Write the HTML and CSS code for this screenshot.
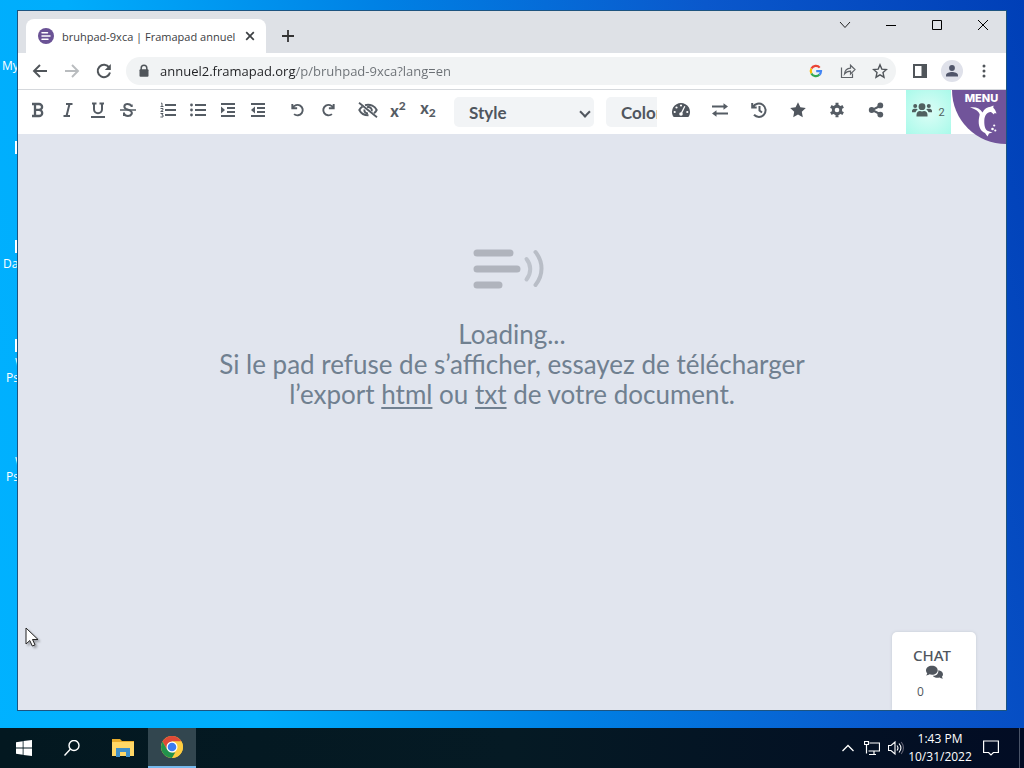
FILE: index.html
```html
<!DOCTYPE html>
<html lang="en">
<head>
<meta charset="utf-8">
<title>bruhpad-9xca | Framapad annuel</title>
<link rel="stylesheet" href="styles.css">
</head>
<body>
<div class="desktop">
  <div class="shortcuts" aria-hidden="true">
    <span class="shortcut s1">My</span>
    <i class="sheet p1"></i>
    <i class="sheet p2"></i>
    <span class="shortcut s2">Da</span>
    <i class="sheet p3"></i>
    <span class="shortcut s3"><span class="indent">W</span><br>Ps</span>
    <span class="shortcut s4"><span class="indent">W</span><br>Ps</span>
  </div>

  <div class="window">
    <header class="tabstrip">
      <div class="tab">
        <svg class="favicon" viewBox="0 0 16 16"><circle cx="8" cy="8" r="8" fill="#6a5295"/><path d="M4 4.7h5.500M4 8h8M4 11.300h6" stroke="#fff" stroke-width="1.500" stroke-linecap="round"/></svg>
        <span class="tab-title">bruhpad-9xca | Framapad annuel</span>
        <button class="tab-close" aria-label="Close tab"><svg viewBox="0 0 16 16"><path d="M4.200 4.200l7.600 7.600M11.800 4.200l-7.600 7.600" stroke="#3c4043" stroke-width="1.700"/></svg></button>
      </div>
      <button class="new-tab" aria-label="New tab"><svg viewBox="0 0 16 16"><path d="M8 2v12M2 8h12" stroke="#333" stroke-width="1.800"/></svg></button>
      <div class="caption">
        <button aria-label="Search tabs"><svg viewBox="0 0 16 16"><path d="M3 5l5 5.500L13 5" fill="none" stroke="#222"/></svg></button>
        <button aria-label="Minimize"><svg viewBox="0 0 16 16"><path d="M3 8.500h10" stroke="#000"/></svg></button>
        <button aria-label="Maximize"><svg viewBox="0 0 16 16"><path d="M3.500 3.500h9v9h-9z" fill="none" stroke="#000"/></svg></button>
        <button aria-label="Close"><svg viewBox="0 0 16 16"><path d="M3 3l10 10M13 3L3 13" stroke="#000"/></svg></button>
      </div>
    </header>

    <div class="navbar">
      <button class="nav" aria-label="Back"><svg viewBox="0 0 16 16"><path d="M15 8H2M8 2L2 8l6 6" fill="none" stroke="#50555a" stroke-width="1.900"/></svg></button>
      <button class="nav" aria-label="Forward"><svg viewBox="0 0 16 16"><path d="M1 8h13M8 2l6 6-6 6" fill="none" stroke="#b9bcbf" stroke-width="1.900"/></svg></button>
      <button class="nav" aria-label="Reload"><svg viewBox="0 0 16 16"><path d="M13.200 4.600A6.200 6.200 0 1 0 14 9.500" fill="none" stroke="#50555a" stroke-width="2"/><path d="M14.800 1v6H8.800z" fill="#50555a"/></svg></button>
      <div class="omnibox">
        <svg viewBox="0 0 16 16"><path d="M5.200 7V5a2.800 2.800 0 0 1 5.600 0v2" fill="none" stroke="#50555a" stroke-width="1.500"/><rect x="3.500" y="6.300" width="9" height="7.500" rx="1" fill="#50555a"/></svg>
        <input class="url" type="text" aria-label="Address" value="annuel2.framapad.org/p/bruhpad-9xca?lang=en">
        <button aria-label="Google"><svg viewBox="0 0 16 16" fill="none" stroke-width="2.200"><path d="M3.400 5.600A5 5 0 0 1 11.700 4.600" stroke="#ea4335"/><path d="M3.400 5.600a5 5 0 0 0 0 4.800" stroke="#fbbc05"/><path d="M3.400 10.400a5 5 0 0 0 8.100 1.200" stroke="#34a853"/><path d="M11.500 11.600A5 5 0 0 0 13 8.200H8.200" stroke="#4285f4"/></svg></button>
        <button aria-label="Share"><svg viewBox="0 0 16 16" fill="none" stroke="#5f6368" stroke-width="1.200"><path d="M1.500 4.500v10h11v-4"/><path d="M4.500 11c.4-4 2.600-5.800 6-5.900V2.200L15 6.600 10.500 11V8.200c-2.600 0-4.500.8-6 2.800z"/></svg></button>
        <button aria-label="Bookmark"><svg viewBox="0 0 16 16"><path d="M8 1.800l1.800 4.300 4.700.4-3.500 3.100 1 4.600L8 11.800l-4 2.400 1-4.600-3.500-3.100 4.700-.4z" fill="none" stroke="#50555a" stroke-width="1.400"/></svg></button>
      </div>
      <button class="ext" aria-label="Side panel"><svg viewBox="0 0 16 16"><path d="M1 1h14v14H1z" fill="#50555a"/><path d="M3 3h6.500v10H3z" fill="#fff"/></svg></button>
      <button class="ext avatar" aria-label="Profile"><svg viewBox="0 0 16 16" fill="#50556a"><circle cx="8" cy="5" r="2.900"/><path d="M2 13.500v-1.300C2 10 5.500 9 8 9s6 1 6 3.200v1.300z"/></svg></button>
      <button class="ext" aria-label="Browser menu"><svg viewBox="0 0 16 16" fill="#50555a"><circle cx="8" cy="3" r="1.500"/><circle cx="8" cy="8" r="1.500"/><circle cx="8" cy="13" r="1.500"/></svg></button>
    </div>

    <div class="padbar">
      <div class="edit-tools">
        <div class="group">
          <button aria-label="Bold"><svg viewBox="0 0 16 16" fill="none" stroke="#555c64" stroke-width="2.300"><path d="M2 2h7a3 2.800 0 0 1 0 5.800H5M9 7.800a3.200 3.100 0 0 1 0 6.200H2M5 2v12"/></svg></button>
          <button aria-label="Italic"><svg viewBox="0 0 16 16" fill="none" stroke="#555c64" stroke-width="2"><path d="M6 2h6.500M3.500 14H10M9.500 2l-3 12"/></svg></button>
          <button aria-label="Underline"><svg viewBox="0 0 16 16" fill="none" stroke="#555c64" stroke-width="2"><path d="M2 1.500h4.500M9.500 1.500H14M4 1.500v5.800a4 4 0 0 0 8 0V1.500M1 15h14"/></svg></button>
          <button aria-label="Strikethrough"><svg viewBox="0 0 16 16" fill="none" stroke="#555c64" stroke-width="2"><path d="M11.700 5V2.500M11.500 4C10.500 2.500 9 2 7.500 2 3.800 2 3.500 5.600 6 6.900l4 1.600c3.500 2 1.500 5.500-2 5.500-2 0-3.500-1-4-2.500M4 14v-3.500"/><path d="M0 8h16" stroke-width="1.500"/></svg></button>
        </div>
        <div class="group">
          <button aria-label="Ordered list"><svg viewBox="0 0 16 16" fill="none" stroke="#555c64" stroke-width="2"><path d="M5 3h11M5 8h11M5 13h11"/><path d="M1 1.200h1v3.300M.5 4.500h3M.5 6.500H3v1.300L.7 9.500h2.600M.5 11.500H3L1.800 13H3v2H.4" stroke-width="1"/></svg></button>
          <button aria-label="Unordered list"><svg viewBox="0 0 16 16" fill="none" stroke="#555c64" stroke-width="2"><path d="M5 3h11M5 8h11M5 13h11"/><path d="M1.500 3h.01M1.500 8h.01M1.500 13h.01" stroke-width="2.800" stroke-linecap="round"/></svg></button>
          <button aria-label="Indent"><svg viewBox="0 0 16 16"><path d="M1 2h14M7 6h8M7 10h8M1 14h14" stroke="#555c64" stroke-width="2"/><path d="M1 4.500L5 8l-4 3.500z" fill="#555c64"/></svg></button>
          <button aria-label="Outdent"><svg viewBox="0 0 16 16"><path d="M1 2h14M7 6h8M7 10h8M1 14h14" stroke="#555c64" stroke-width="2"/><path d="M5 4.500L1 8l4 3.500z" fill="#555c64"/></svg></button>
        </div>
        <div class="group">
          <button aria-label="Undo"><svg viewBox="0 0 16 16" fill="none" stroke="#555c64" stroke-width="2.200"><path d="M1.500 1v5h5.500M2 5.500a6 6 0 1 1 1.500 7.200"/></svg></button>
          <button aria-label="Redo"><svg viewBox="0 0 16 16" fill="none" stroke="#555c64" stroke-width="2.200"><path d="M14.500 1v5H9M14 5.500a6 6 0 1 0-1.500 7.200"/></svg></button>
        </div>
        <div class="group">
          <button aria-label="Clear authorship colors"><svg class="wide" viewBox="0 0 20 16" fill="none" stroke="#555c64"><path d="M4.500 4.500C2.800 5.700 1.700 7.200 1.300 8 3 11.500 6 13.300 10.500 13.300M7 3.200C12.500 1.700 17 4.500 18.700 8c-.5 1-1.400 2.200-2.700 3.200" stroke-width="1.900"/><path d="M6.300 7.500c0 2.200 1.500 3.800 3.700 3.900M9 5.200c3-.8 5.500 1.500 4.700 4" stroke-width="1.900"/><path d="M1 .8l18 14.400" stroke-width="1.800"/></svg></button>
          <button aria-label="Superscript" class="script">x<sup>2</sup></button>
          <button aria-label="Subscript" class="script lower">x<sub>2</sub></button>
        </div>
        <div class="selects">
          <select class="pick" aria-label="Style"><option>Style</option></select>
          <select class="pick" aria-label="Color"><option>Color</option></select>
        </div>
      </div>
      <div class="pad-tools">
        <button aria-label="Dashboard"><svg class="wide" viewBox="0 0 20 16"><path d="M10 1a9 9 0 0 0-8 13.200c.2.500.7.800 1.200.8h13.600c.5 0 1-.3 1.200-.8A9 9 0 0 0 10 1z" fill="#50565e"/><g fill="#fff"><circle cx="10" cy="3.500" r="1.100"/><circle cx="5.500" cy="5.500" r="1.100"/><circle cx="3.700" cy="10" r="1.100"/><circle cx="16.300" cy="10" r="1.100"/></g><path d="M13.800 4.300L10.500 11" stroke="#fff" stroke-width="1.300"/><circle cx="10" cy="12" r="1.800" fill="#fff"/></svg></button>
        <button aria-label="Import and export"><svg viewBox="0 0 16 16"><path d="M0 4.500h13M16 11.500H3" stroke="#555c64" stroke-width="1.800"/><path d="M11.500 1.200l4.500 3.300-4.500 3.300zM4.500 8.200L0 11.500l4.500 3.300z" fill="#555c64"/></svg></button>
        <button aria-label="Timeslider"><svg viewBox="0 0 16 16" fill="none" stroke="#555c64" stroke-width="2"><path d="M1.200 1v4.500h4.500M2 5a6.700 6.700 0 1 1 1 7.800M8.500 4v4.500l2.500 2"/></svg></button>
        <button aria-label="Saved revision"><svg viewBox="0 0 16 16"><path d="M8 .2l2.400 5 5.400.7-4 3.800 1 5.500L8 12.600l-4.800 2.600 1-5.500-4-3.800 5.400-.7z" fill="#50565e"/></svg></button>
        <button aria-label="Settings"><svg viewBox="0 0 16 16"><path d="M8 2.700l1.800.4 1.700 1 1.200 1.700.5 2.200-.5 2.200-1.200 1.700-1.700 1-1.800.4-1.800-.4-1.700-1-1.200-1.700L2.800 8l.5-2.200 1.200-1.700 1.700-1zM6.500.8h3v14.400h-3zM1.100 5.700l1.500-2.600 12.300 7.200-1.500 2.600zM13.400 3.100l1.500 2.600-12.300 7.200-1.500-2.600z" fill="#555c64"/><circle cx="8" cy="8" r="2.300" fill="#fff"/></svg></button>
        <button aria-label="Share pad"><svg viewBox="0 0 16 16" fill="#555c64"><path d="M13 3.500L4 8l9 4.500" fill="none" stroke="#555c64" stroke-width="2"/><circle cx="12.300" cy="3.400" r="2.900"/><circle cx="3.700" cy="8" r="2.900"/><circle cx="12.300" cy="12.600" r="2.900"/></svg></button>
      </div>
      <button class="users" aria-label="Users"><svg class="wide" viewBox="0 0 20 16" fill="#50605f"><circle cx="10" cy="4.700" r="3.400"/><circle cx="3.200" cy="4" r="2"/><circle cx="16.800" cy="4" r="2"/><path d="M4.500 14.500v-1.700c0-2.200 1.500-3.800 3.500-3.800 1.300.6 2.700.6 4 0 2 0 3.500 1.600 3.500 3.800v1.700zM0 10.300V9c0-1.200 1-2.200 2.200-2.200h2c.6 0 1.100.2 1.500.6A5 5 0 0 0 3.500 10.300zM20 10.300V9c0-1.200-1-2.200-2.200-2.200h-2c-.6 0-1.100.2-1.500.6a5 5 0 0 1 2.200 2.900z"/></svg><span>2</span></button>
      <button class="frama"><span>MENU</span><svg viewBox="0 0 30 32" fill="#fff"><path d="M1 2.500C6 1.500 11 3 13.500 7.500c1.800-3.700 5-5.500 8-5.700L24.500.5l-.2 2.300c1.700 1.800 2.700 3.500 3.200 5.700l-2-.5-.5 1.500-3-2.500c-4-.3-6.500 3.500-6.700 8.500-.2 5.500 1 9.500 3.700 10.500l4.500 1.500-3.500 1-1.500 3-2.500-3.500C12 26.500 9.500 22 9.700 16c.1-3 .8-5 1-6.500C10 6 6 4 1 2.500z"/><circle cx="25.200" cy="20.500" r="1.100"/><circle cx="23.500" cy="24" r="1.300"/><circle cx="26.300" cy="25.500" r="1.100"/></svg></button>
    </div>

    <main class="pad">
      <svg class="loader" viewBox="0 0 76 44" fill="none" stroke="#b0b4bd" stroke-linecap="round"><path d="M7 6h33M7 22h40M7 38h22" stroke-width="7"/><path d="M56.500 12c5 6 5 14 0 20.500" stroke-width="4" stroke="#bec3cc"/><path d="M65.500 5c8 10 8 23 0 33" stroke-width="4" stroke="#b8bdc6"/></svg>
      <p class="message">Loading...<br>Si le pad refuse de s’afficher, essayez de télécharger<br>l’export <a href="#html">html</a> ou <a href="#txt">txt</a> de votre document.</p>
    </main>
    <button class="chat"><span class="chat-title">CHAT</span><svg class="bubbles" viewBox="0 0 20 16" fill="#50565e"><path d="M14.500 5.800C17.500 6.200 20 8 20 10.500c0 1.200-.5 2.200-1.300 3 .3.800.8 1.400 1.300 2-1.500.2-2.900-.3-4-1-3 .9-6.500.2-8-2 4 .1 7-2.500 6.500-6.700z"/><path d="M7 .5c3.900 0 6.800 2.400 6.800 5.400s-2.900 5.300-6.800 5.300c-1 0-2-.2-2.900-.5-1 .8-2.400 1.300-4.100 1.300.7-.7 1.300-1.600 1.500-2.500C.6 8.500 0 7.300 0 5.900 0 2.900 3.100.5 7 .5z"/></svg><span class="chat-count">0</span></button>
  </div>

  <svg class="cursor" viewBox="0 0 14 21"><path d="M1 1v16l3.800-3.500 2.500 5.500 2.700-1.200-2.500-5.300H13z" fill="#fff" stroke="#222"/></svg>

  <footer class="taskbar">
    <button class="task" aria-label="Start"><svg viewBox="0 0 16 16" fill="#fff"><path d="M0 2.200l6.700-1v6.400H0zM7.500 1.100L16 0v7.600H7.500zM0 8.400h6.700v6.400L0 13.800zM7.500 8.400H16V16l-8.500-1.100z"/></svg></button>
    <button class="task" aria-label="Search"><svg viewBox="0 0 16 16" fill="none" stroke="#fff" stroke-width="1.400"><circle cx="10" cy="5.500" r="5"/><path d="M6.500 9L.5 15.500"/></svg></button>
    <button class="task gap" aria-label="File Explorer"><svg class="big" viewBox="0 0 22 22"><path d="M0 2h8l2 2h12v15H0z" fill="#e8ac2c"/><path d="M0 5h22v14H0z" fill="#ffd766"/><path d="M4 11h14v9h-4v-5H8v5H4z" fill="#3f8fc9"/></svg></button>
    <button class="task active" aria-label="Google Chrome"><svg class="big" viewBox="0 0 22 22"><circle cx="11" cy="11" r="11" fill="#ffcd40"/><path d="M1.500 5.500A11 11 0 0 1 20.500 5.500H11L6.200 13.700z" fill="#df4937"/><path d="M1.500 5.500l4.700 8.200L11 16.500h4.700L11 22A11 11 0 0 1 1.500 5.500z" fill="#22924c"/><path d="M15.800 13.700L11 22a11 11 0 0 0 9.500-16.500H11z" fill="#ffcd40"/><circle cx="11" cy="11" r="5.500" fill="#fff"/><circle cx="11" cy="11" r="4.300" fill="#3d7bf0"/></svg></button>
    <div class="tray">
      <button aria-label="Show hidden icons"><svg viewBox="0 0 16 16" fill="none" stroke="#fff" stroke-width="1.300"><path d="M2.500 11L8 5.500l5.500 5.500"/></svg></button>
      <button aria-label="Network"><svg viewBox="0 0 16 16" fill="none" stroke="#fff" stroke-width="1.200"><path d="M5.500 3h10v8h-11M10 11v3.500M5 14.500h7M.5 1.500h4v3h-4zM2.500 4.500v9"/></svg></button>
      <button aria-label="Volume"><svg viewBox="0 0 16 16" fill="none" stroke="#fff" stroke-width="1.100"><path d="M.5 5.500h2.500l4-3.500v12L3 10.500H.5zM9 5.500c1.200 1.500 1.200 3.500 0 5M11 3.500c2.300 2.700 2.300 6.300 0 9"/><path d="M13.200 2c3 3.500 3 8.500 0 12" stroke="#667"/></svg></button>
      <time class="clock">1:43 PM<br>10/31/2022</time>
      <button class="notes" aria-label="Notifications"><svg viewBox="0 0 16 16" fill="none" stroke="#fff" stroke-width="1.200"><path d="M.6 1h14.800v11.500h-5L8 15l-2.400-2.500h-5z"/></svg></button>
    </div>
  </footer>
</div>
</body>
</html>
```
FILE: styles.css
```css
* { box-sizing: border-box; }
body { margin: 0; font-family: "Open Sans", "Noto Sans", sans-serif; font-size: 12px; }
button, input, select { font: inherit; border: 0; background: none; padding: 0; margin: 0; }
button { display: flex; align-items: center; justify-content: center; }
svg { display: block; width: 16px; height: 16px; flex: none; }
svg.wide { width: 20px; }
svg.big { width: 22px; height: 22px; }

.desktop {
  position: relative;
  display: flex;
  flex-direction: column;
  justify-content: flex-end;
  min-height: 100vh;
  overflow: hidden;
  background: linear-gradient(75deg, #00b2ff 0%, #00adfc 22%, #0080e4 48%, #0a58cc 74%, #003fb7 100%);
}
.shortcut { position: absolute; color: #fff; line-height: 15px; }
.indent { padding-left: 9px; }
.s1 { left: 2px; top: 58px; }
.s2 { left: 3px; top: 256px; }
.s3 { left: 6px; top: 355px; }
.s4 { left: 6px; top: 454px; }
.sheet { position: absolute; left: 15px; width: 3px; height: 13px; background: #fff; }
.p1 { top: 141px; }
.p2 { top: 240px; }
.p3 { top: 339px; }

.window {
  position: absolute;
  inset: 10px 17px 57px 17px;
  display: flex;
  flex-direction: column;
  border: 1px solid #1d5480;
  background: #e1e5ee;
  overflow: hidden;
}
.tabstrip { display: flex; height: 42px; padding-left: 8px; background: #dee1e6; }
.tab {
  display: flex;
  align-items: center;
  width: 240px;
  margin-top: 8px;
  padding: 0 8px 0 12px;
  border-radius: 8px 8px 0 0;
  background: #fff;
  color: #3c4043;
  font-size: 11px;
}
.favicon { margin-right: 8px; }
.tab-title { flex: 1; white-space: nowrap; }
.new-tab { width: 28px; margin: 8px 0 0 8px; }
.caption { display: flex; align-items: flex-start; margin-left: auto; }
.caption button { width: 46px; height: 28px; }

.navbar {
  display: flex;
  align-items: center;
  height: 37px;
  padding: 0 6px;
  background: #fff;
  border-bottom: 1px solid #d5d8dc;
}
.nav { width: 32px; height: 28px; }
.omnibox {
  flex: 1;
  display: flex;
  align-items: center;
  height: 28px;
  margin: 0 8px 0 6px;
  padding: 0 4px 0 10px;
  gap: 8px;
  border-radius: 14px;
  background: #f1f3f4;
}
.omnibox button { width: 24px; height: 24px; }
.url {
  flex: 1;
  min-width: 0;
  font-size: 13px;
  color: transparent;
  background: linear-gradient(90deg, #202124 136px, #6a6f74 136px);
  background-clip: text;
  -webkit-background-clip: text;
}
.ext { width: 32px; height: 28px; }
.avatar { width: 22px; height: 22px; margin: 0 5px; border-radius: 50%; background: #dfe1ea; }

.padbar { display: flex; height: 44px; background: #fff; color: #50565e; }
.edit-tools {
  flex: 1;
  min-width: 0;
  display: flex;
  gap: 10px;
  padding: 0 0 4px 5px;
  overflow: hidden;
}
.group { display: flex; flex: none; }
.group button { width: 30px; }
.group svg { width: 14px; height: 14px; }
.group svg.wide { width: 20px; height: 16px; }
.group:nth-child(1) svg, .group:nth-child(2) svg { width: 16px; height: 16px; }
.script { font-family: Lato, sans-serif; font-weight: 900; font-size: 16px; color: #555c64; }
.script sup, .script sub { font-size: 12px; line-height: 0; }
.script sup { margin-bottom: 8px; }
.script sub { margin-top: 12px; }
.group .lower { padding-bottom: 6px; }
.selects { position: relative; display: flex; align-items: center; flex: none; gap: 12px; margin-left: 1px; padding-top: 4px; }
.pick {
  appearance: none;
  width: 140px;
  height: 30px;
  padding: 0 15px;
  border-radius: 5px;
  font-family: Lato, sans-serif;
  font-size: 17px;
  font-weight: 700;
  color: #50565e;
  background: #f2f4f6;
}
.selects::before {
  content: "";
  position: absolute;
  left: 127px;
  top: 18px;
  width: 6px;
  height: 6px;
  border: solid #50565e;
  border-width: 0 2px 2px 0;
  transform: rotate(45deg);
}
.pad-tools { display: flex; padding: 0 11px 4px 4px; }
.pad-tools button { width: 39px; }
.users {
  width: 45px;
  gap: 6px;
  padding-bottom: 4px;
  background: radial-gradient(#dcfdf6, #a9faea);
  font-family: Roboto, sans-serif;
  font-size: 11px;
  color: #50605f;
}
.users span { padding-top: 4px; }
.frama {
  flex-direction: column;
  justify-content: flex-start;
  width: 54px;
  height: 54px;
  margin: 0 0 -10px 1px;
  padding: 2px 0 0 5px;
  border-radius: 0 0 0 54px;
  background: #71549a;
  color: #fff;
  font-family: Inter, sans-serif;
  font-size: 11px;
  font-weight: 800;
  line-height: 13px;
}
.frama svg { width: 30px; height: 32px; margin-left: 4px; }

.pad { display: flex; flex-direction: column; align-items: center; padding-top: 113px; }
.loader { width: 76px; height: 44px; margin-right: 8px; }
.message {
  margin: 28px 0 0;
  font-family: Lato, sans-serif;
  font-size: 26px;
  line-height: 30px;
  text-align: center;
  color: #708090;
}
.message a { color: inherit; text-underline-offset: 3px; text-decoration-thickness: 2px; }
.chat {
  position: absolute;
  right: 30px;
  bottom: 0;
  flex-direction: column;
  width: 84px;
  height: 78px;
  padding: 8px 4px 0 0;
  border-radius: 5px 5px 0 0;
  background: #fff;
  box-shadow: 0 0 3px #c4cad2;
  color: #50565e;
}
.chat-title { font-family: "Noto Sans", sans-serif; font-size: 15px; font-weight: 500; line-height: 20px; }
.chat .bubbles { width: 17px; height: 14px; margin-left: 4px; }
.chat-count { align-self: flex-start; margin-left: 25px; font-size: 12px; line-height: 26px; }
.cursor { position: absolute; left: 25px; top: 627px; width: 14px; height: 21px; filter: drop-shadow(2px 2px 1px rgba(0, 0, 0, .3)); }

.taskbar { display: flex; height: 40px; background: linear-gradient(90deg, #031820, #051a24 50%, #020c24); color: #fff; }
.task { width: 48px; }
.gap { margin-left: 3px; }
.task.active { background: #32464f; border-bottom: 2px solid #76b9ed; margin-left: 1px; }
.tray { display: flex; align-items: center; margin-left: auto; margin-right: 4px; border-right: 1px solid #4a5468; }
.tray button { width: 24px; height: 40px; }
.clock { width: 64px; text-align: center; line-height: 18px; }
.tray .notes { width: 38px; margin-right: 9px; }
```
